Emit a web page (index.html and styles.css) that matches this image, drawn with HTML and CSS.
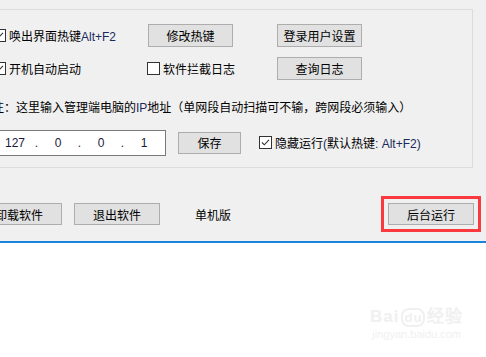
FILE: index.html
```html
<!DOCTYPE html>
<html lang="zh-CN">
<head>
    <meta charset="UTF-8">
    <meta name="viewport" content="width=device-width, initial-scale=1.0">
    <title>后台运行设置</title>
    <link rel="stylesheet" href="styles.css">
</head>
<body>

<div class="panel">
    <div class="window">
        <div class="group">
            <div class="row row1">
                <label class="check w155">
                    <svg class="cb" width="13" height="13" viewBox="0 0 13 13"><rect x="0.5" y="0.5" width="12" height="12" fill="#fff" stroke="#333"/><path d="M3 6.5l2.3 2.3L10 3.8" fill="none" stroke="#333" stroke-width="1.1"/></svg>
                    <span>唤出界面热键<span class="lat">Alt+F2</span></span>
                </label>
                <button class="btn">修改热键</button>
                <button class="btn gap44">登录用户设置</button>
            </div>

            <div class="row row2">
                <label class="check w154">
                    <svg class="cb" width="13" height="13" viewBox="0 0 13 13"><rect x="0.5" y="0.5" width="12" height="12" fill="#fff" stroke="#333"/><path d="M3 6.5l2.3 2.3L10 3.8" fill="none" stroke="#333" stroke-width="1.1"/></svg>
                    <span>开机自动启动</span>
                </label>
                <label class="check w130">
                    <svg class="cb" width="13" height="13" viewBox="0 0 13 13"><rect x="0.5" y="0.5" width="12" height="12" fill="#fff" stroke="#333"/></svg>
                    <span>软件拦截日志</span>
                </label>
                <button class="btn">查询日志</button>
            </div>

            <div class="note">注：这里输入管理端电脑的<span class="lat">IP</span>地址（单网段自动扫描可不输，跨网段必须输入）</div>

            <div class="row row4">
                <div class="ipbox">
                    <span class="oct">127</span><span class="dot">.</span>
                    <span class="oct">0</span><span class="dot">.</span>
                    <span class="oct">0</span><span class="dot">.</span>
                    <span class="oct">1</span>
                </div>
                <button class="btn save">保存</button>
                <label class="check hide">
                    <svg class="cb" width="13" height="13" viewBox="0 0 13 13"><rect x="0.5" y="0.5" width="12" height="12" fill="#fff" stroke="#333"/><path d="M3 6.5l2.3 2.3L10 3.8" fill="none" stroke="#333" stroke-width="1.1"/></svg>
                    <span>隐藏运行<span class="lat">(</span>默认热键<span class="lat">: Alt+F2)</span></span>
                </label>
            </div>
        </div>

        <div class="bottom">
            <button class="btn">卸载软件</button>
            <button class="btn exit">退出软件</button>
            <span class="edition">单机版</span>
            <div class="mark">
                <button class="btn">后台运行</button>
            </div>
        </div>
    </div>
</div>

<div class="wm">
    <div class="wm-logo">Bai<span class="paw">du</span>经验</div>
    <div class="wm-url">jingyan.baidu.com</div>
</div>

</body>
</html>
```

FILE: styles.css
```css
body {
    margin: 0;
    background-color: #ffffff;
    font-family: "Noto Sans CJK SC", "Liberation Sans", sans-serif;
    font-size: 12px;
    color: #000;
    overflow: hidden;
    height: 357px;
    position: relative;
}
.panel {
    background-color: #f0f0f0;
    height: 241px;
    border-bottom: 2px solid #1a84dc;
    overflow: hidden;
}
.window {
    margin-left: -30px;
    width: 516px;
    padding-top: 9px;
}
.group {
    box-sizing: border-box;
    width: 503px;
    height: 159px;
    border: 1px solid #dcdcdc;
    padding: 14px 0 0 22px;
}
.row {
    display: flex;
    align-items: center;
    height: 23px;
}
.row2 {
    margin-top: 10px;
}
.row4 {
    margin-top: 14px;
    height: 27px;
}
.check {
    display: flex;
    align-items: center;
    white-space: nowrap;
}
.check .cb {
    flex: none;
    margin-right: 3px;
}
.w155 { width: 155px; }
.w154 { width: 154px; }
.w130 { width: 130px; }
.lat {
    font-family: "Liberation Sans", sans-serif;
    color: #1b2a5c;
}
.btn {
    box-sizing: border-box;
    width: 85px;
    height: 23px;
    padding: 0;
    background-color: #e1e1e1;
    border: 1px solid #adadad;
    font-family: "Noto Sans CJK SC", sans-serif;
    font-size: 12px;
    color: #000;
}
.gap44 {
    margin-left: 44px;
}
.note {
    margin: 19px 0 0 -1px;
    height: 16px;
    line-height: 16px;
    white-space: nowrap;
}
.ipbox {
    box-sizing: border-box;
    width: 173px;
    height: 26px;
    background-color: #fff;
    border: 1px solid #7a7a7a;
    display: flex;
    align-items: center;
    padding-left: 6px;
    font-family: "Liberation Sans", sans-serif;
    font-size: 12px;
    color: #1a1a40;
}
.oct {
    width: 30px;
    text-align: center;
}
.dot {
    width: 13px;
    text-align: center;
}
.save {
    width: 63px;
    height: 22px;
    margin-left: 12px;
}
.hide {
    margin-left: 18px;
}
.bottom {
    display: flex;
    align-items: center;
    margin-top: 28px;
    padding-left: 6px;
}
.bottom .btn {
    width: 86px;
    height: 22px;
}
.exit {
    margin-left: 12px;
}
.edition {
    margin-left: 35px;
}
.mark {
    margin-left: auto;
    margin-right: 5px;
    border: 3px solid #fa3a3e;
    padding: 4px;
}
.wm {
    position: absolute;
    left: 370px;
    top: 302px;
    color: #f0f0f0;
    font-family: "Liberation Sans", sans-serif;
    text-align: center;
}
.wm-logo {
    font-size: 17px;
    font-weight: bold;
    letter-spacing: 1px;
}
.paw {
    font-size: 13px;
    border: 2px solid #f0f0f0;
    border-radius: 8px;
    padding: 0 1px;
    margin: 0 2px;
}
.wm-url {
    font-size: 11px;
    margin-top: 1px;
}
```
